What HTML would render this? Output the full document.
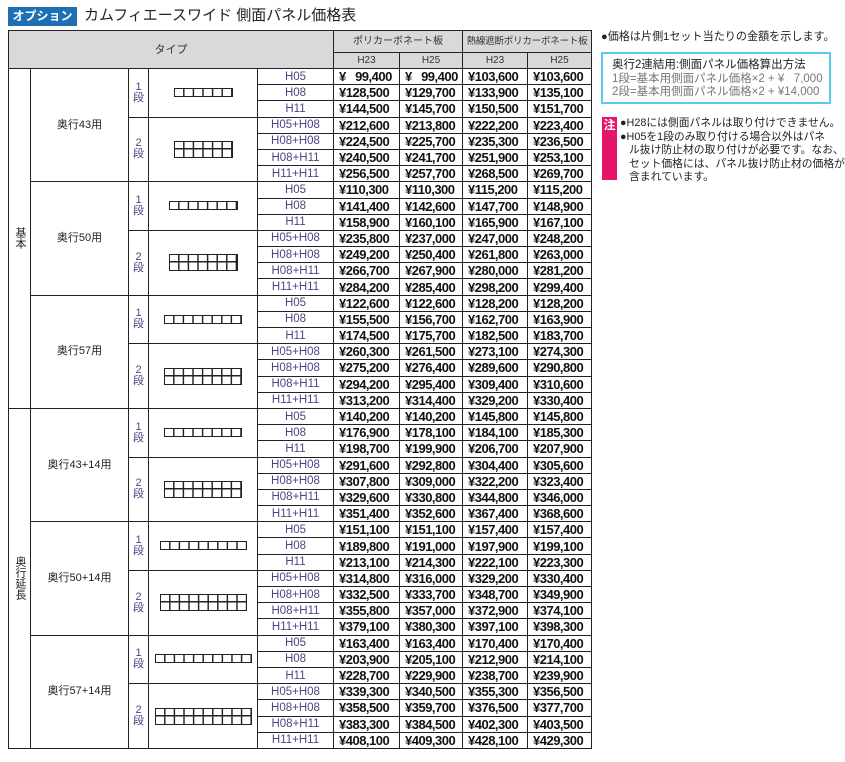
<!DOCTYPE html>
<html><head><meta charset="utf-8">
<style>
*{margin:0;padding:0;box-sizing:border-box}
body{width:845px;height:762px;background:#fff;position:relative;overflow:hidden;font-family:"Liberation Sans","Noto Sans CJK JP",sans-serif;color:#222}
.tag{position:absolute;left:8px;top:7px;width:69px;height:19px;background:#1f6fb5;color:#fff;font-weight:bold;font-size:12px;line-height:19px;text-align:center}
.title{position:absolute;left:84px;top:5px;font-size:15px;line-height:22px;color:#222}
table{position:absolute;left:8px;top:30px;width:583px;border-collapse:collapse;table-layout:fixed;border:1.5px solid #222}
td{border:1px solid #222;padding:0;text-align:center;vertical-align:middle;font-size:11px;line-height:13px;overflow:hidden;white-space:nowrap}
tr.b{height:16.19px}
th{background:#d9d9d9;border:1px solid #222;font-weight:normal;font-size:10px;line-height:12px;color:#333;white-space:nowrap;overflow:hidden;padding:0}
td.h{color:#553f86;font-size:11.5px;padding-top:1px}
td.p{font-weight:bold;font-size:13px;letter-spacing:-0.5px;color:#111;text-align:left;padding-left:5px}
td.g{font-size:11px}
td.s{font-size:11px;line-height:11px;color:#553f86}
td.v{writing-mode:vertical-rl;font-size:11px;letter-spacing:0}
.d{display:inline-block;border:1.5px solid #222;height:9px;background-image:linear-gradient(to right,#222 1.5px,transparent 1.5px);background-size:9.6px 100%;background-position:8.1px 0;background-repeat:repeat-x;vertical-align:middle}
.d2{height:17px;background-image:linear-gradient(to right,#222 1.5px,transparent 1.5px),linear-gradient(to bottom,transparent 6.25px,#222 6.25px,#222 7.75px,transparent 7.75px);background-size:9.6px 100%,100% 100%;background-position:8.1px 0,0 0;background-repeat:repeat-x,no-repeat}
.r1{position:absolute;left:601px;top:29px;font-size:11.1px;line-height:16px;color:#222;white-space:nowrap}
.box{position:absolute;left:601px;top:52px;width:230px;height:52px;border:2px solid #5bc8ef;padding:5px 0 0 9px;font-size:11.5px;line-height:13.5px;white-space:nowrap}
.box .gr{color:#777}
.note{position:absolute;left:602px;top:117px;width:15px;height:63px;background:#e4156b;color:#fff;font-weight:bold;font-size:12px;text-align:center;line-height:16px}
.nt{position:absolute;left:620px;top:117px;font-size:10.8px;line-height:13.6px;color:#222;white-space:nowrap}
</style></head><body>
<div class="tag">オプション</div>
<div class="title">カムフィエースワイド 側面パネル価格表</div>
<table>
<colgroup><col style="width:22px"><col style="width:98px"><col style="width:20px"><col style="width:109px"><col style="width:76px"><col style="width:66px"><col style="width:63px"><col style="width:65px"><col style="width:64px"></colgroup>
<tr style="height:22px"><th colspan="5" rowspan="2" style="font-size:11px">タイプ</th><th colspan="2">ポリカーボネート板</th><th colspan="2" style="font-size:9.5px;letter-spacing:-0.2px">熱線遮断ポリカーボネート板</th></tr>
<tr style="height:16px"><th>H23</th><th>H25</th><th>H23</th><th>H25</th></tr>

<tr class="b"><td class="v" rowspan="21">基本</td><td class="g" rowspan="7">奥行43用</td><td class="s" rowspan="3">1<br>段</td><td rowspan="3"><span class="d" style="width:59px"></span></td><td class="h">H05</td><td class="p">¥&nbsp;&nbsp;&nbsp;99,400</td><td class="p">¥&nbsp;&nbsp;&nbsp;99,400</td><td class="p">¥103,600</td><td class="p">¥103,600</td></tr>
<tr class="b"><td class="h">H08</td><td class="p">¥128,500</td><td class="p">¥129,700</td><td class="p">¥133,900</td><td class="p">¥135,100</td></tr>
<tr class="b"><td class="h">H11</td><td class="p">¥144,500</td><td class="p">¥145,700</td><td class="p">¥150,500</td><td class="p">¥151,700</td></tr>
<tr class="b"><td class="s" rowspan="4">2<br>段</td><td rowspan="4"><span class="d d2" style="width:59px"></span></td><td class="h">H05+H08</td><td class="p">¥212,600</td><td class="p">¥213,800</td><td class="p">¥222,200</td><td class="p">¥223,400</td></tr>
<tr class="b"><td class="h">H08+H08</td><td class="p">¥224,500</td><td class="p">¥225,700</td><td class="p">¥235,300</td><td class="p">¥236,500</td></tr>
<tr class="b"><td class="h">H08+H11</td><td class="p">¥240,500</td><td class="p">¥241,700</td><td class="p">¥251,900</td><td class="p">¥253,100</td></tr>
<tr class="b"><td class="h">H11+H11</td><td class="p">¥256,500</td><td class="p">¥257,700</td><td class="p">¥268,500</td><td class="p">¥269,700</td></tr>

<tr class="b"><td class="g" rowspan="7">奥行50用</td><td class="s" rowspan="3">1<br>段</td><td rowspan="3"><span class="d" style="width:69px"></span></td><td class="h">H05</td><td class="p">¥110,300</td><td class="p">¥110,300</td><td class="p">¥115,200</td><td class="p">¥115,200</td></tr>
<tr class="b"><td class="h">H08</td><td class="p">¥141,400</td><td class="p">¥142,600</td><td class="p">¥147,700</td><td class="p">¥148,900</td></tr>
<tr class="b"><td class="h">H11</td><td class="p">¥158,900</td><td class="p">¥160,100</td><td class="p">¥165,900</td><td class="p">¥167,100</td></tr>
<tr class="b"><td class="s" rowspan="4">2<br>段</td><td rowspan="4"><span class="d d2" style="width:69px"></span></td><td class="h">H05+H08</td><td class="p">¥235,800</td><td class="p">¥237,000</td><td class="p">¥247,000</td><td class="p">¥248,200</td></tr>
<tr class="b"><td class="h">H08+H08</td><td class="p">¥249,200</td><td class="p">¥250,400</td><td class="p">¥261,800</td><td class="p">¥263,000</td></tr>
<tr class="b"><td class="h">H08+H11</td><td class="p">¥266,700</td><td class="p">¥267,900</td><td class="p">¥280,000</td><td class="p">¥281,200</td></tr>
<tr class="b"><td class="h">H11+H11</td><td class="p">¥284,200</td><td class="p">¥285,400</td><td class="p">¥298,200</td><td class="p">¥299,400</td></tr>

<tr class="b"><td class="g" rowspan="7">奥行57用</td><td class="s" rowspan="3">1<br>段</td><td rowspan="3"><span class="d" style="width:78px"></span></td><td class="h">H05</td><td class="p">¥122,600</td><td class="p">¥122,600</td><td class="p">¥128,200</td><td class="p">¥128,200</td></tr>
<tr class="b"><td class="h">H08</td><td class="p">¥155,500</td><td class="p">¥156,700</td><td class="p">¥162,700</td><td class="p">¥163,900</td></tr>
<tr class="b"><td class="h">H11</td><td class="p">¥174,500</td><td class="p">¥175,700</td><td class="p">¥182,500</td><td class="p">¥183,700</td></tr>
<tr class="b"><td class="s" rowspan="4">2<br>段</td><td rowspan="4"><span class="d d2" style="width:78px"></span></td><td class="h">H05+H08</td><td class="p">¥260,300</td><td class="p">¥261,500</td><td class="p">¥273,100</td><td class="p">¥274,300</td></tr>
<tr class="b"><td class="h">H08+H08</td><td class="p">¥275,200</td><td class="p">¥276,400</td><td class="p">¥289,600</td><td class="p">¥290,800</td></tr>
<tr class="b"><td class="h">H08+H11</td><td class="p">¥294,200</td><td class="p">¥295,400</td><td class="p">¥309,400</td><td class="p">¥310,600</td></tr>
<tr class="b"><td class="h">H11+H11</td><td class="p">¥313,200</td><td class="p">¥314,400</td><td class="p">¥329,200</td><td class="p">¥330,400</td></tr>

<tr class="b"><td class="v" rowspan="21">奥行延長</td><td class="g" rowspan="7">奥行43+14用</td><td class="s" rowspan="3">1<br>段</td><td rowspan="3"><span class="d" style="width:78px"></span></td><td class="h">H05</td><td class="p">¥140,200</td><td class="p">¥140,200</td><td class="p">¥145,800</td><td class="p">¥145,800</td></tr>
<tr class="b"><td class="h">H08</td><td class="p">¥176,900</td><td class="p">¥178,100</td><td class="p">¥184,100</td><td class="p">¥185,300</td></tr>
<tr class="b"><td class="h">H11</td><td class="p">¥198,700</td><td class="p">¥199,900</td><td class="p">¥206,700</td><td class="p">¥207,900</td></tr>
<tr class="b"><td class="s" rowspan="4">2<br>段</td><td rowspan="4"><span class="d d2" style="width:78px"></span></td><td class="h">H05+H08</td><td class="p">¥291,600</td><td class="p">¥292,800</td><td class="p">¥304,400</td><td class="p">¥305,600</td></tr>
<tr class="b"><td class="h">H08+H08</td><td class="p">¥307,800</td><td class="p">¥309,000</td><td class="p">¥322,200</td><td class="p">¥323,400</td></tr>
<tr class="b"><td class="h">H08+H11</td><td class="p">¥329,600</td><td class="p">¥330,800</td><td class="p">¥344,800</td><td class="p">¥346,000</td></tr>
<tr class="b"><td class="h">H11+H11</td><td class="p">¥351,400</td><td class="p">¥352,600</td><td class="p">¥367,400</td><td class="p">¥368,600</td></tr>

<tr class="b"><td class="g" rowspan="7">奥行50+14用</td><td class="s" rowspan="3">1<br>段</td><td rowspan="3"><span class="d" style="width:87px"></span></td><td class="h">H05</td><td class="p">¥151,100</td><td class="p">¥151,100</td><td class="p">¥157,400</td><td class="p">¥157,400</td></tr>
<tr class="b"><td class="h">H08</td><td class="p">¥189,800</td><td class="p">¥191,000</td><td class="p">¥197,900</td><td class="p">¥199,100</td></tr>
<tr class="b"><td class="h">H11</td><td class="p">¥213,100</td><td class="p">¥214,300</td><td class="p">¥222,100</td><td class="p">¥223,300</td></tr>
<tr class="b"><td class="s" rowspan="4">2<br>段</td><td rowspan="4"><span class="d d2" style="width:87px"></span></td><td class="h">H05+H08</td><td class="p">¥314,800</td><td class="p">¥316,000</td><td class="p">¥329,200</td><td class="p">¥330,400</td></tr>
<tr class="b"><td class="h">H08+H08</td><td class="p">¥332,500</td><td class="p">¥333,700</td><td class="p">¥348,700</td><td class="p">¥349,900</td></tr>
<tr class="b"><td class="h">H08+H11</td><td class="p">¥355,800</td><td class="p">¥357,000</td><td class="p">¥372,900</td><td class="p">¥374,100</td></tr>
<tr class="b"><td class="h">H11+H11</td><td class="p">¥379,100</td><td class="p">¥380,300</td><td class="p">¥397,100</td><td class="p">¥398,300</td></tr>

<tr class="b"><td class="g" rowspan="7">奥行57+14用</td><td class="s" rowspan="3">1<br>段</td><td rowspan="3"><span class="d" style="width:97px"></span></td><td class="h">H05</td><td class="p">¥163,400</td><td class="p">¥163,400</td><td class="p">¥170,400</td><td class="p">¥170,400</td></tr>
<tr class="b"><td class="h">H08</td><td class="p">¥203,900</td><td class="p">¥205,100</td><td class="p">¥212,900</td><td class="p">¥214,100</td></tr>
<tr class="b"><td class="h">H11</td><td class="p">¥228,700</td><td class="p">¥229,900</td><td class="p">¥238,700</td><td class="p">¥239,900</td></tr>
<tr class="b"><td class="s" rowspan="4">2<br>段</td><td rowspan="4"><span class="d d2" style="width:97px"></span></td><td class="h">H05+H08</td><td class="p">¥339,300</td><td class="p">¥340,500</td><td class="p">¥355,300</td><td class="p">¥356,500</td></tr>
<tr class="b"><td class="h">H08+H08</td><td class="p">¥358,500</td><td class="p">¥359,700</td><td class="p">¥376,500</td><td class="p">¥377,700</td></tr>
<tr class="b"><td class="h">H08+H11</td><td class="p">¥383,300</td><td class="p">¥384,500</td><td class="p">¥402,300</td><td class="p">¥403,500</td></tr>
<tr class="b"><td class="h">H11+H11</td><td class="p">¥408,100</td><td class="p">¥409,300</td><td class="p">¥428,100</td><td class="p">¥429,300</td></tr>
</table>

<div class="r1">●価格は片側1セット当たりの金額を示します。</div>
<div class="box"><div>奥行2連結用:側面パネル価格算出方法</div><div class="gr">1段=基本用側面パネル価格×2 + ¥&nbsp;&nbsp;&nbsp;7,000</div><div class="gr">2段=基本用側面パネル価格×2 + ¥14,000</div></div>
<div class="note">注</div>
<div class="nt">●H28には側面パネルは取り付けできません。<br>●H05を1段のみ取り付ける場合以外はパネ<br>&nbsp;&nbsp;&nbsp;ル抜け防止材の取り付けが必要です。なお、<br>&nbsp;&nbsp;&nbsp;セット価格には、パネル抜け防止材の価格が<br>&nbsp;&nbsp;&nbsp;含まれています。</div>
</body></html>
